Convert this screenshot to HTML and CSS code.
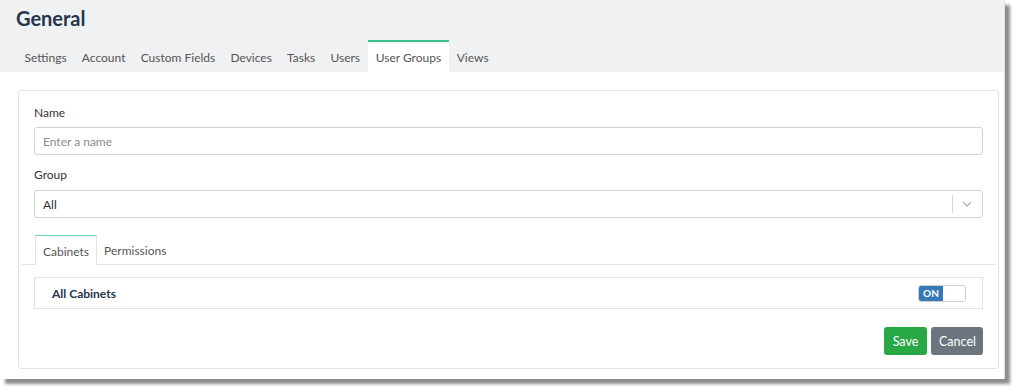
FILE: index.html
```html
<!DOCTYPE html>
<html>
<head>
<meta charset="utf-8">
<link rel="stylesheet" href="styles.css">
</head>
<body>
<div class="window">
  <div class="header">
    <h1 class="title">General</h1>
    <div class="tabs">
      <div class="tab">Settings</div>
      <div class="tab">Account</div>
      <div class="tab">Custom Fields</div>
      <div class="tab">Devices</div>
      <div class="tab">Tasks</div>
      <div class="tab">Users</div>
      <div class="tab active">User Groups</div>
      <div class="tab">Views</div>
    </div>
  </div>
  <div class="main">
    <div class="card">
      <label class="label">Name</label>
      <div class="input placeholder">Enter a name</div>
      <label class="label label-gap">Group</label>
      <div class="input select">
        <span>All</span>
        <span class="select-ind">
          <span class="sep"></span>
          <svg width="10" height="6" viewBox="0 0 10 6"><path d="M1 1 L5 5 L9 1" fill="none" stroke="#b5b5b5" stroke-width="1.3"/></svg>
        </span>
      </div>
      <div class="subtabs">
        <div class="subtab active">Cabinets</div>
        <div class="subtab">Permissions</div>
      </div>
      <div class="row">
        <span class="row-title">All Cabinets</span>
        <span class="toggle"><span class="on">ON</span><span class="off"></span></span>
      </div>
      <div class="actions">
        <button class="btn btn-save">Save</button>
        <button class="btn btn-cancel">Cancel</button>
      </div>
    </div>
  </div>
</div>
</body>
</html>
```

FILE: styles.css
```css
* { box-sizing: border-box; }
html, body { margin: 0; padding: 0; background: #ffffff; }
body {
  font-family: "Lato", "Open Sans", sans-serif;
  font-size: 12px;
  color: #333;
  min-height: 390px;
}
.window {
  width: 1005px;
  height: 379px;
  background: #fff;
  border-right: 1px solid #e2e2e2;
  box-shadow: 5px 5px 3px rgba(0,0,0,0.45);
  display: flex;
  flex-direction: column;
}
.header {
  background: #f0f1f3;
  height: 72px;
  flex: 0 0 72px;
  display: flex;
  flex-direction: column;
  justify-content: space-between;
}
.title {
  margin: 0;
  padding: 4px 0 0 16px;
  font-size: 20px;
  font-weight: 700;
  color: #25364d;
  line-height: 28px;
}
.tabs {
  display: flex;
  padding-left: 17px;
  height: 32px;
}
.tab {
  padding: 1px 7.6px 0;
  line-height: 29px;
  color: #555;
  border-top: 2px solid transparent;
}
.tab.active {
  background: #fff;
  border-top: 2px solid #3cc28c;
  padding-left: 8px;
  padding-right: 8px;
}
.main {
  flex: 1;
  min-height: 0;
  padding: 18px 5px 10px 18px;
}
.card {
  height: 100%;
  border: 1px solid #e3e3e3;
  border-radius: 3px;
  padding: 13px 15px 13px 15px;
  display: flex;
  flex-direction: column;
}
.label {
  display: block;
  line-height: 18px;
  margin-bottom: 5px;
  color: #333;
}
.label-gap { margin-top: 11px; margin-bottom: 6px; }
.input {
  height: 28px;
  flex: 0 0 28px;
  border: 1px solid #d2d2d2;
  border-radius: 3px;
  padding: 0 8px;
  display: flex;
  align-items: center;
  color: #333;
}
.placeholder { color: #8a8a8a; }
.select { justify-content: space-between; padding-right: 10px; }
.select-ind { display: flex; align-items: center; gap: 9px; }
.sep { width: 1px; height: 18px; background: #d8d8d8; }
.subtabs {
  margin: 17px -12px 0 -12px;
  padding-left: 13px;
  display: flex;
  border-bottom: 1px solid #e3e3e3;
  height: 30px;
  flex: 0 0 30px;
}
.subtab {
  padding: 0 7px;
  line-height: 28px;
  color: #555;
  border-top: 2px solid transparent;
}
.subtab.active {
  border-top: 1px solid #6fd2a7;
  border-left: 1px solid #e3e3e3;
  border-right: 1px solid #e3e3e3;
  background: #fff;
  margin-bottom: -1px;
  line-height: 29px;
  padding-top: 1px;
}
.row {
  margin-top: 12px;
  height: 32px;
  flex: 0 0 32px;
  border: 1px solid #e3e3e3;
  display: flex;
  align-items: center;
  justify-content: space-between;
  padding: 0 16px 0 17px;
}
.row-title {
  font-weight: 700;
  font-size: 12px;
  color: #25364d;
}
.toggle {
  display: flex;
  width: 48px;
  height: 17px;
  border: 1px solid #cfcfcf;
  border-radius: 3px;
  overflow: hidden;
}
.toggle .on {
  width: 24px;
  background: #337ab7;
  color: #fff;
  font-size: 10px;
  font-weight: 700;
  display: flex;
  align-items: center;
  justify-content: center;
}
.toggle .off { flex: 1; background: #fff; }
.actions {
  margin-top: 18px;
  display: flex;
  justify-content: flex-end;
  gap: 4px;
}
.btn {
  height: 28px;
  border: none;
  border-radius: 3px;
  color: #fff;
  font-family: "Lato", "Open Sans", sans-serif;
  font-size: 12.5px;
  padding: 0 8px;
}
.btn-save { background: #28a745; width: 43px; }
.btn-cancel { background: #6c757d; width: 52px; }
```
